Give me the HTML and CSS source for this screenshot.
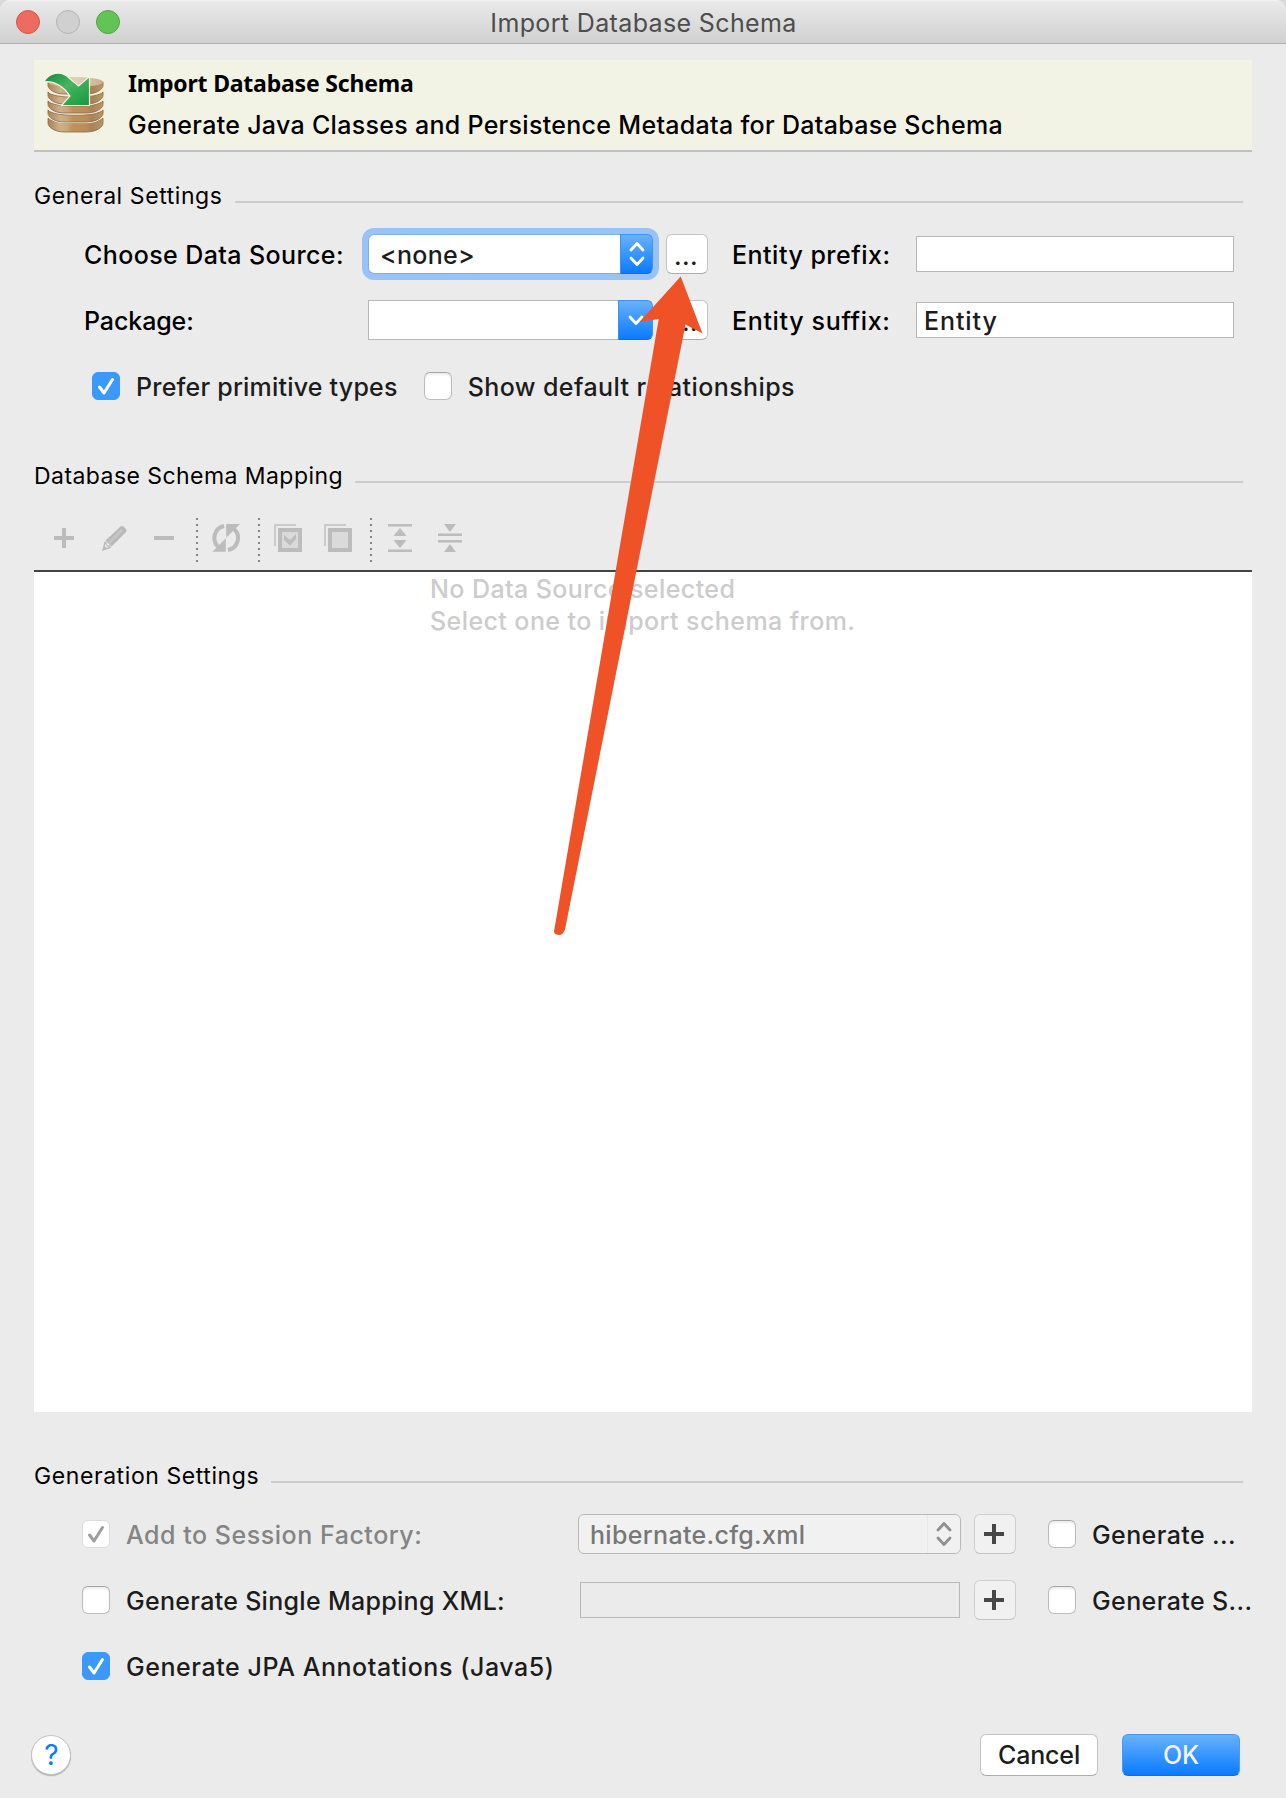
FILE: index.html
```
<!DOCTYPE html>
<html lang="en">
<head>
<meta charset="utf-8">
<title>Import Database Schema</title>
<link rel="stylesheet" href="styles.css">
</head>
<body>
<div class="window">
  <header class="titlebar">
    <div class="lights"><i class="light red"></i><i class="light gray"></i><i class="light green"></i></div>
    <div class="title">Import Database Schema</div>
  </header>

  <main class="content">
    <section class="banner">
      <svg class="db-icon" width="62" height="62" viewBox="0 0 62 62">
        <defs>
          <linearGradient id="wood" x1="0" x2="1" y1="0" y2="0">
            <stop offset="0" stop-color="#a98355"/><stop offset=".22" stop-color="#cdb08a"/><stop offset=".34" stop-color="#c9a87b"/>
            <stop offset=".45" stop-color="#bd925a"/><stop offset=".7" stop-color="#b98d58"/><stop offset=".8" stop-color="#a78355"/><stop offset="1" stop-color="#b99668"/>
          </linearGradient>
          <linearGradient id="pale" x1="0" x2="1" y1="0" y2="0">
            <stop offset="0" stop-color="#cbb597"/><stop offset=".5" stop-color="#e0d0b5"/><stop offset="1" stop-color="#cbb28c"/>
          </linearGradient>
          <linearGradient id="leaf" x1="0" x2="1" y1="0" y2="1">
            <stop offset="0" stop-color="#17833c"/><stop offset=".45" stop-color="#45b761"/><stop offset="1" stop-color="#17973a"/>
          </linearGradient>
        </defs>
        <g fill="url(#wood)" stroke="#8a6c48" stroke-width=".8">
          <path d="M5 46c4 7 50 7 55 0v5c0 4-6 9-17 9H22C11 60 5 55 5 51z"/>
          <path d="M5 38c4 7 50 7 55 0v3c0 4-6 9-17 9H22C11 50 5 45 5 41z" stroke="#f0e8d8" stroke-width="2.500"/>
          <path d="M5 38c4 7 50 7 55 0v3c0 4-6 9-17 9H22C11 50 5 45 5 41z"/>
          <path d="M5 29c4 7 50 7 55 0v3c0 4-6 9-17 9H22C11 41 5 36 5 32z" stroke="#f0e8d8" stroke-width="2.500"/>
          <path d="M5 29c4 7 50 7 55 0v3c0 4-6 9-17 9H22C11 41 5 36 5 32z"/>
          <path d="M5 20c4 7 50 7 55 0v3c0 4-6 9-17 9H22C11 32 5 27 5 23z" stroke="#f0e8d8" stroke-width="2.500"/>
          <path d="M5 20c4 7 50 7 55 0v3c0 4-6 9-17 9H22C11 32 5 27 5 23z"/>
          <path d="M5 10v3c0 4 6 9 17 9h21c11 0 17-5 17-9v-3z" stroke="#f0e8d8" stroke-width="2.500"/>
          <path d="M5 10v3c0 4 6 9 17 9h21c11 0 17-5 17-9v-3z"/>
        </g>
        <ellipse cx="32.500" cy="10" rx="27.500" ry="5" fill="url(#pale)"/>
        <path d="M.8 10C6 .5 18-2 26 6l9.500 8L46.500 4.500v29H18.500l8.500-9.500C21 15 11 8 .8 10z" fill="url(#leaf)" stroke="#f5f3e2" stroke-width="1.200"/>
      </svg>
      <div class="banner-text">
        <div class="banner-title">Import Database Schema</div>
        <div class="banner-sub">Generate Java Classes and Persistence Metadata for Database Schema</div>
      </div>
    </section>

    <h2 class="section general"><span>General Settings</span></h2>
    <div class="form">
      <label class="label t-choose">Choose Data Source:</label>
      <div class="combo focused">
        <span class="value t-none">&lt;none&gt;</span>
        <span class="stepper"><svg width="16" height="26" viewBox="0 0 16 26"><path d="M2 9l6-6.500L14 9M2 17l6 6.500L14 17"/></svg></span>
      </div>
      <button class="small-btn dots">...</button>
      <label class="label second t-fix">Entity prefix:</label>
      <div class="input"></div>

      <label class="label t-package">Package:</label>
      <div class="combo square">
        <span class="value"></span>
        <span class="stepper"><svg width="16" height="26" viewBox="0 0 16 26"><path d="M2 10l6 6.500L14 10"/></svg></span>
      </div>
      <button class="small-btn dots">...</button>
      <label class="label second t-suffix">Entity suffix:</label>
      <div class="input"><span class="t-entity">Entity</span></div>
    </div>
    <div class="options">
      <label class="option"><i class="box on"><svg width="28" height="28" viewBox="0 0 28 28"><path d="M7.500 15l4.500 6L20.500 7.500"/></svg></i><span class="t-prefer">Prefer primitive types</span></label>
      <label class="option"><i class="box"></i><span class="t-show">Show default relationships</span></label>
    </div>

    <h2 class="section mapping"><span>Database Schema Mapping</span></h2>
    <div class="toolbar">
      <svg width="28" height="28" viewBox="0 0 28 28"><path d="M12 4h4v8h8v4h-8v8h-4v-8H4v-4h8z"/></svg>
      <svg width="28" height="28" viewBox="0 0 28 28"><path d="M20 3q2-2 4 0l1.500 1.500q2 2 0 4L11.500 22.500 5.500 16.500z" fill="#b9b9b9"/><path d="M22 6L9 19" stroke="#c6c6c6" stroke-width="2.500"/><path d="M4.500 17.500L2 27l9-3-1-2.500-3-.5-.5-3z" fill="#bbb"/><path d="M5.500 19.500l-1 3 2 1.500 2.500-1-2-1z" fill="#e2e2e2"/></svg>
      <svg width="28" height="28" viewBox="0 0 28 28"><path d="M4 12h20v4H4z"/></svg>
      <i class="sep"></i>
      <svg width="28" height="28" viewBox="0 0 28 28"><path d="M12 2A12.200 12.200 0 0 0 6.500 23M22 5A12.200 12.200 0 0 1 16 26" fill="none" stroke="#bcbcbc" stroke-width="4"/><path d="M.3 27.800H13.800V14.300zM14.200 0H28L14.200 13.800z"/></svg>
      <i class="sep"></i>
      <svg width="28" height="28" viewBox="0 0 28 28"><path d="M0 0h22v2H2v20H0z" fill="#cbcbcb"/><path d="M6 6h20v20H6z" fill="#dadada" stroke="#bcbcbc" stroke-width="4"/><path d="M10 11l6 5 6-6v5l-6 6.500-6-5.500z"/></svg>
      <svg width="28" height="28" viewBox="0 0 28 28"><path d="M0 0h22v2H2v20H0z" fill="#cbcbcb"/><path d="M6 6h20v20H6z" fill="#dadada" stroke="#bcbcbc" stroke-width="4"/></svg>
      <i class="sep"></i>
      <svg width="28" height="28" viewBox="0 0 28 28"><path d="M2 0h24v2.500H2zM2 25.500h24V28H2zM14 4l6.500 8h-13zM14 24l6.500-8h-13z"/></svg>
      <svg width="28" height="28" viewBox="0 0 28 28"><path d="M2 9.500h24V12H2zM2 16h24v2.500H2zM14 8l6-8H8zM14 20l6 8H8z"/></svg>
    </div>
    <div class="panel">
      <p>No Data Source selected<br>Select one to import schema from.</p>
    </div>

    <h2 class="section generation"><span>Generation Settings</span></h2>
    <div class="gen">
      <label class="option off"><i class="box"><svg width="28" height="28" viewBox="0 0 28 28"><path d="M7.500 15l4.500 6L20.500 7.500"/></svg></i><span class="t-add">Add to Session Factory:</span></label>
      <div class="combo disabled">
        <span class="value">hibernate.cfg.xml</span>
        <span class="stepper"><svg width="16" height="26" viewBox="0 0 16 26"><path d="M2 9l6-6.500L14 9M2 17l6 6.500L14 17"/></svg></span>
      </div>
      <button class="small-btn plus"><svg width="20" height="20"><path d="M8 0h4v8h8v4h-8v8H8v-8H0V8h8z"/></svg></button>
      <label class="option"><i class="box"></i><span>Generate ...</span></label>

      <label class="option"><i class="box"></i><span class="t-single">Generate Single Mapping XML:</span></label>
      <div class="input disabled-input"></div>
      <button class="small-btn plus"><svg width="20" height="20"><path d="M8 0h4v8h8v4h-8v8H8v-8H0V8h8z"/></svg></button>
      <label class="option"><i class="box"></i><span>Generate S...</span></label>

      <label class="option"><i class="box on"><svg width="28" height="28" viewBox="0 0 28 28"><path d="M7.500 15l4.500 6L20.500 7.500"/></svg></i><span class="t-jpa">Generate JPA Annotations (Java5)</span></label>
    </div>

    <footer class="footer">
      <button class="help">?</button>
      <button class="btn">Cancel</button>
      <button class="btn primary">OK</button>
    </footer>
  </main>

  <svg class="arrow" width="1286" height="1798" viewBox="0 0 1286 1798"><path d="M680.700 276.500L702.500 333.500 685.500 324.500 565 929.500Q563 935 559 935 554 934.500 554 931.500L658.700 319 639.500 322z"/></svg>
</div>
</body>
</html>
```
FILE: styles.css
```
* { box-sizing: border-box; }
body {
  margin: 0;
  background: #d9d9d9;
  font: 450 25px/32px Inter, "Liberation Sans", sans-serif;
  letter-spacing: .4px;
  color: #1c1c1c;
}
svg { display: block; flex: none; }
button { font: inherit; letter-spacing: inherit; color: inherit; padding: 0; }
.window {
  position: relative;
  width: 1286px;
  height: 1798px;
  overflow: hidden;
  background: #ebebeb;
  border-radius: 10px 10px 0 0;
  white-space: nowrap;
}

.titlebar {
  display: grid;
  grid-template-columns: 1fr auto 1fr;
  align-items: center;
  height: 44px;
  padding: 0 16px;
  background: linear-gradient(#f6f6f6 0, #e9e9e9 2px, #d1d1d1 42px);
  border-bottom: 1.500px solid #b1b1b1;
}
.lights { display: flex; gap: 16px; }
.light { width: 24px; height: 24px; border-radius: 50%; border: 1px solid; }
.red { background: #ed6b5f; border-color: #d8554a; }
.gray { background: #d0d0d0; border-color: #b4b4b4; }
.green { background: #61c454; border-color: #4fa73e; }
.title { color: #4d4d4d; font-weight: 400; letter-spacing: .36px; padding: 3px 0 0 1px; }

.content { padding: 16px 34px 0; }
.banner {
  display: flex;
  height: 92px;
  padding: 12px 0 0 9px;
  gap: 23px;
  background: #f3f3e5;
  border-bottom: 2px solid #bfbfbf;
  color: #000;
}
.banner-title { margin-top: -1px; font: bold 23px/24px "Noto Sans", "Open Sans", sans-serif; letter-spacing: -.2px; }
.banner-sub { margin-top: 14px; letter-spacing: .3px; }

.section {
  display: flex;
  gap: 12px;
  height: 30px;
  margin: 0 9px 0 0;
  font-size: 23px;
  font-weight: 400;
  line-height: 30px;
  letter-spacing: .58px;
  color: #000;
}
.section span { margin-top: 1px; }
.section::after { content: ""; flex: 1; height: 2px; margin-top: 21px; background: #ccc; }
.general { margin-top: 28px; }
.mapping { margin-top: 41px; letter-spacing: .44px; }
.generation { margin-top: 48px; }

.form {
  display: grid;
  grid-template-columns: 284px 285px 55px 24px 184px 318px;
  grid-auto-rows: 66px;
  align-items: center;
  margin: 11px 0 0 50px;
}
.form > .label:nth-child(5n+1) { grid-column: 1; }
.form > .second { grid-column: 5; }
.label { padding-top: 1px; color: #000; }
.small-btn {
  display: flex;
  align-items: center;
  justify-content: center;
  width: 42px;
  height: 40px;
  justify-self: end;
  background: #fff;
  border: 1px solid #c4c4c4;
  border-bottom-color: #adadad;
  border-radius: 6px;
}
.dots { padding: 3px 2px 0 0; }
.plus { background: #f1f1f1; border-color: #cfcfcf; border-bottom-color: #c2c2c2; }
.plus svg { fill: #474747; transform: translateX(-1px); }
.input {
  display: flex;
  align-items: center;
  width: 318px;
  height: 36px;
  padding: 1px 0 0 7px;
  background: #fff;
  border: 1px solid #b9b9b9;
}
.combo {
  display: flex;
  width: 285px;
  height: 40px;
  background: #fff;
  border: 1px solid #b9b9b9;
  border-right: 0;
  border-radius: 6px;
}
.combo .value { flex: 1; padding: 4px 0 0 11px; }
.stepper {
  display: flex;
  align-items: center;
  justify-content: center;
  width: 33px;
  margin: -1px 0;
  background: linear-gradient(#68b1fb, #0a7bff);
  border: 1px solid #3d93f5;
  border-bottom-color: #0a6cf0;
  border-radius: 0 6px 6px 0;
}
.stepper svg { fill: none; stroke: #fff; stroke-width: 2.800; stroke-linecap: round; stroke-linejoin: round; }
.focused { box-shadow: 0 0 0 6px #9ac3f5; border-color: #7eaee8; }
.square { border-radius: 0 6px 6px 0; }
.square .stepper { width: 35px; }
.disabled { width: 383px; background: #f1f1f1; border: 1px solid #b9b9b9; color: #777; letter-spacing: .32px; }
.disabled .stepper { margin: 0; background: #f1f1f1; border: 0; border-left: 1px solid #e8e8e8; }
.disabled .stepper svg { stroke: #8f8f8f; }
.disabled-input { width: 380px; margin-left: 2px; background: #ebebeb; }

.options { display: flex; gap: 26px; height: 66px; margin-left: 58px; }
.option { display: flex; align-items: center; gap: 16px; }
.option span { padding-top: 1px; }
.box {
  width: 28px;
  height: 28px;
  flex: none;
  background: #fff;
  border: 1px solid #bdbdbd;
  border-top-color: #a5a5a5;
  border-radius: 6px;
  box-shadow: inset 0 2px 2px #ececec;
}
.box svg { margin: -1px; fill: none; stroke: #fff; stroke-width: 3; stroke-linecap: round; stroke-linejoin: round; }
.on { background: #3b99fc; border-color: #3b99fc; box-shadow: none; }
.off { color: #848484; }
.off .box { border-color: #dcdcdc; box-shadow: none; }
.off svg { stroke: #9d9d9d; }

.toolbar {
  display: flex;
  align-items: center;
  gap: 22px;
  height: 78px;
  padding: 24px 0 10px 16px;
  margin-top: 2px;
  fill: #bcbcbc;
}
.sep { width: 2px; height: 44px; margin: 4px -8px 0 -4px; background: repeating-linear-gradient(#858585 0 2px, transparent 2px 6px); }
.panel { height: 842px; border-top: 2px solid #444; background: #fff; color: #ccc; }
.panel p { margin: 1px 0 0 396px; letter-spacing: .42px; }

.gen {
  display: grid;
  grid-template-columns: 496px 396px 74px auto;
  grid-auto-rows: 66px;
  align-items: center;
  margin: 11px 0 0 48px;
}
.gen .small-btn { justify-self: start; }

.footer { display: flex; align-items: center; height: 66px; margin: 23px 12px 0 -3px; gap: 24px; }
.btn { width: 118px; height: 42px; background: #fff; border: 1px solid #c4c4c4; border-bottom-color: #adadad; border-radius: 6px; letter-spacing: -.15px; }
.primary { background: linear-gradient(#68b1fb, #0a7bff); border-color: #4a98f5; border-bottom-color: #0a6cf0; color: #f3f3f3; }
.help {
  width: 40px;
  height: 40px;
  margin-right: auto;
  padding-left: 1px;
  border: 1px solid #c4c4c4;
  border-radius: 50%;
  background: #fff;
  box-shadow: 0 1px 1px #b0b0b0;
  color: #0a7bff;
  font-size: 28px;
  font-weight: 400;
}

.t-package { letter-spacing: -.1px; }
.t-suffix { letter-spacing: .66px; }
.t-fix { letter-spacing: .49px; }
.t-show { letter-spacing: .41px; }
.t-entity { letter-spacing: .9px; }
.t-none { letter-spacing: .28px; }
.t-prefer { letter-spacing: .21px; }
.t-add { letter-spacing: .53px; }
.t-jpa { letter-spacing: .56px; }
.t-single { letter-spacing: .3px; }

.arrow { position: absolute; inset: 0; fill: #ee5226; pointer-events: none; }
```
